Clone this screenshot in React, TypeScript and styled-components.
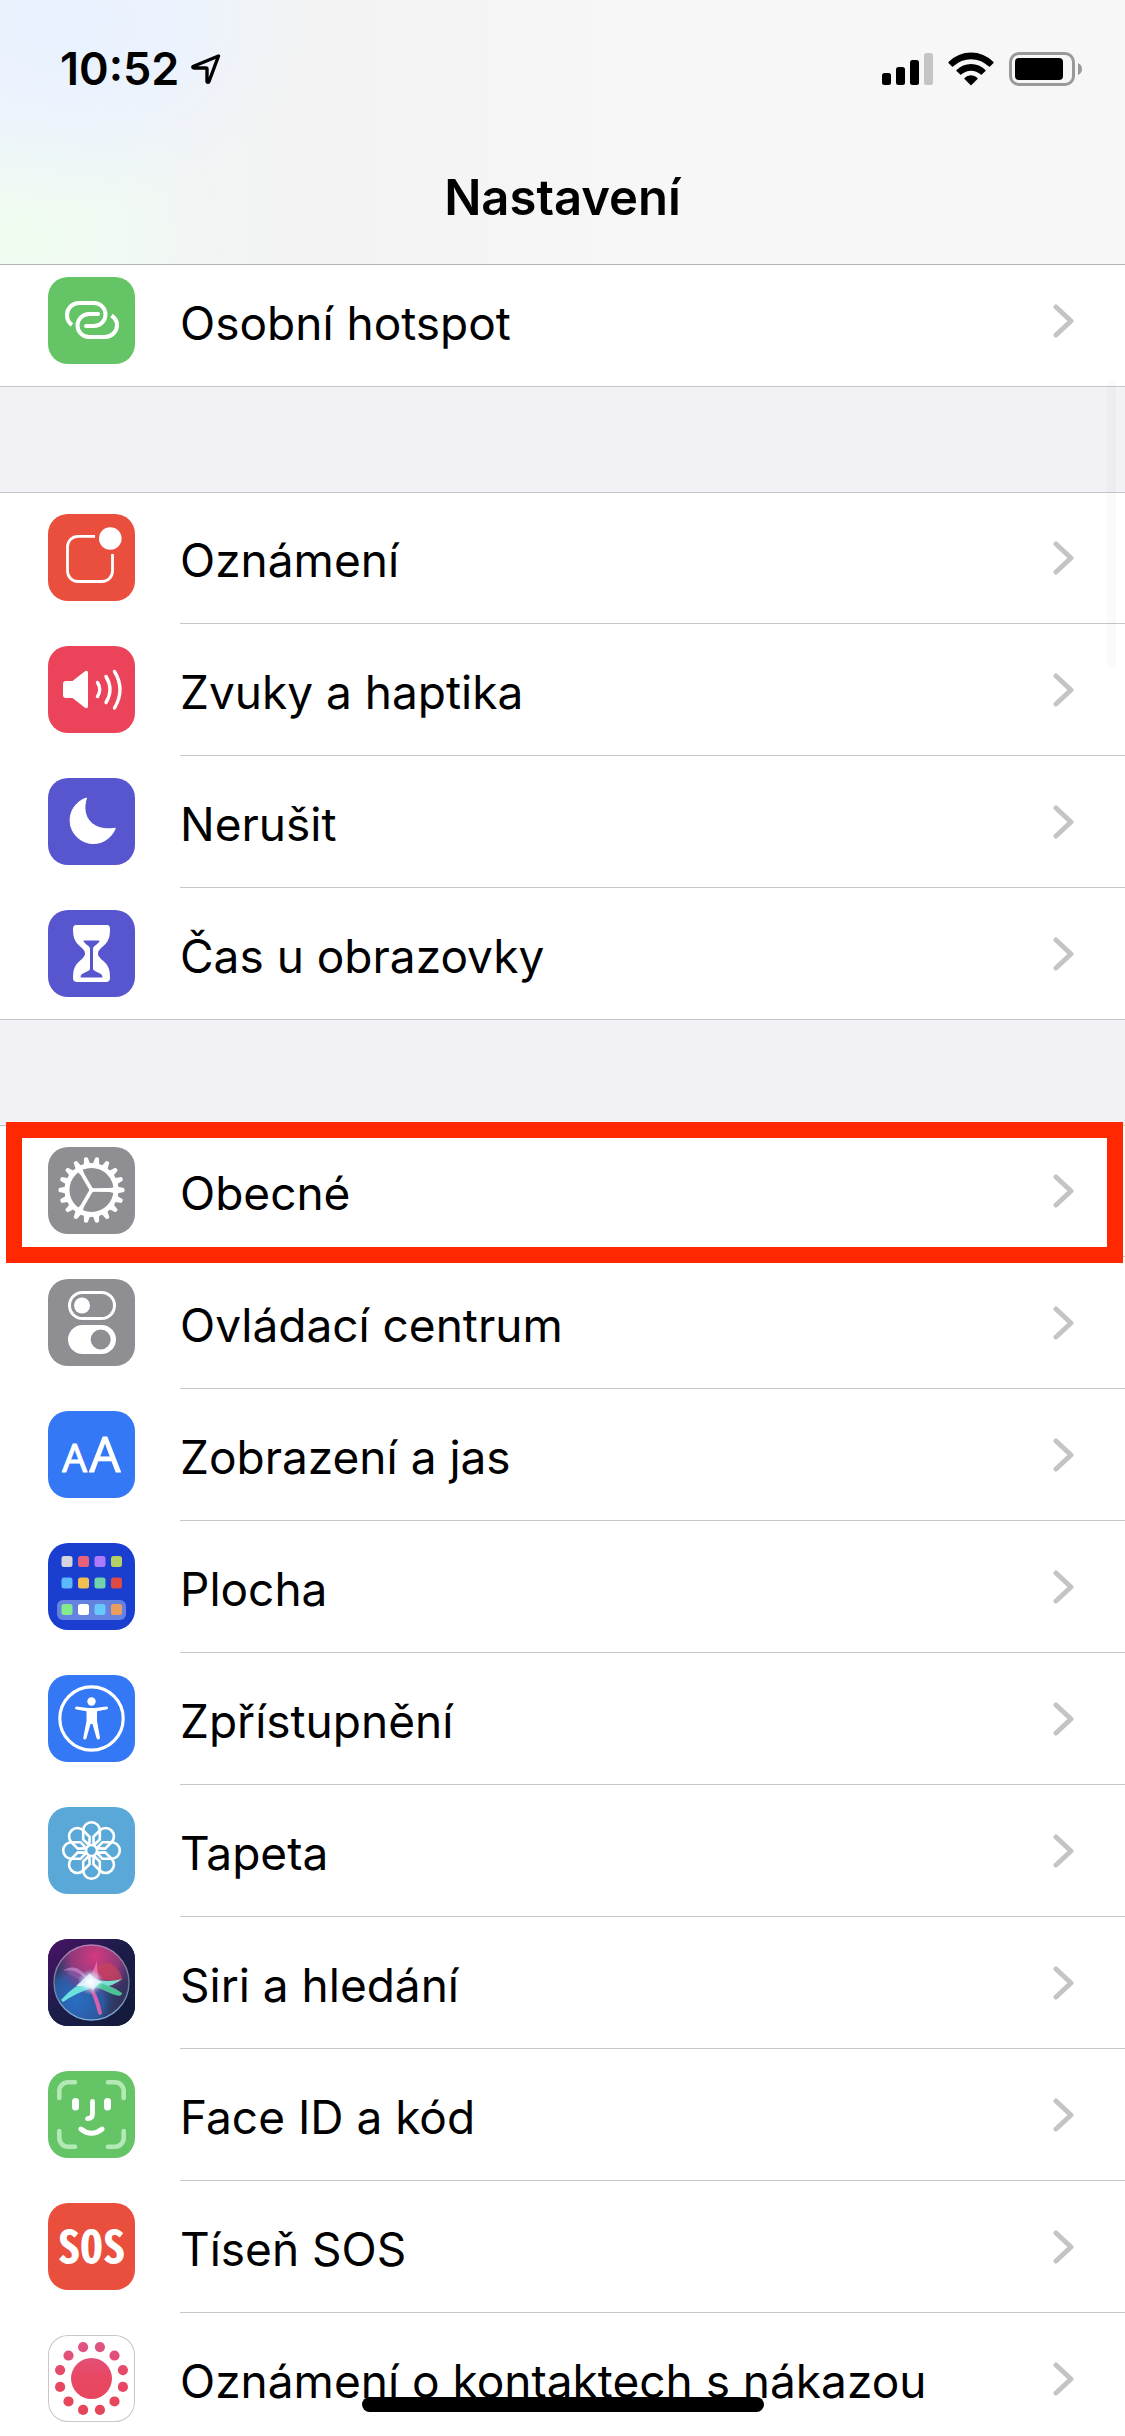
import React from 'react';
import styled, { createGlobalStyle } from 'styled-components';

const GlobalStyle = createGlobalStyle`
  * { box-sizing: border-box; }
  body {
    margin: 0;
    background: #f2f1f6;
    color: #000;
    font-family: Inter, "Liberation Sans", sans-serif;
    -webkit-font-smoothing: antialiased;
  }
`;

const Screen = styled.div`
  position: relative;
  display: flex;
  flex-direction: column;
  height: 100vh;
  overflow: hidden;
`;

const Header = styled.header`
  flex: none;
  border-bottom: 1px solid #b2b2b4;
  background:
    radial-gradient(ellipse 250px 190px at 60px 20px, #e8f1ff 0%, rgba(234, 242, 255, 0.8) 45%, rgba(240, 243, 248, 0) 100%),
    radial-gradient(ellipse 210px 190px at 20px 240px, #f0fcf0 0%, rgba(240, 251, 242, 0.8) 45%, rgba(244, 246, 244, 0) 100%),
    linear-gradient(90deg, #f2f5f7 0%, #f3f3f3 30%, #f7f7f7 60%);
`;

const StatusBar = styled.div`
  display: flex;
  align-items: center;
  justify-content: space-between;
  height: 132px;
  padding: 6px 43px 0 60px;
`;

const Clock = styled.div`
  display: flex;
  align-items: center;
  gap: 12px;
  font-size: 45px;
  line-height: 56px;
  font-weight: 600;
`;

const StatusIcons = styled.div`
  display: flex;
  align-items: center;
  gap: 15px;
`;

const Title = styled.h1`
  margin: 0;
  height: 132px;
  font-size: 49px;
  line-height: 132px;
  font-weight: 600;
  text-align: center;
`;

const Content = styled.main`
  flex: 1;
  min-height: 0;
  overflow: hidden;
`;

const Scrolled = styled.div`
  display: flex;
  flex-direction: column;
  gap: 105px;
  margin-top: -10px;
`;

const Group = styled.ul`
  margin: 0;
  padding: 0;
  list-style: none;
  background: #fff;
  box-shadow: inset 0 1px #c6c6c8, inset 0 -1px #c6c6c8;
`;

const Item = styled.li`
  position: relative;
`;

const Row = styled.a`
  display: flex;
  padding-left: 48px;
  color: inherit;
  text-decoration: none;
`;

const Tile = styled.span<{ $bg: string; $outlined?: boolean }>`
  flex: none;
  width: 87px;
  height: 87px;
  margin: 22px 45px 23px 0;
  overflow: hidden;
  border-radius: 20px;
  background: ${p => p.$bg};
  box-shadow: ${p => (p.$outlined ? 'inset 0 0 0 1px #c8c8ca' : 'none')};

  svg {
    display: block;
  }
`;

const Body = styled.span`
  display: flex;
  flex: 1;
  align-items: center;
  justify-content: space-between;
  padding-right: 51px;
  border-bottom: 1px solid #c6c6c8;

  ${Item}:last-child & {
    border-bottom-color: transparent;
  }
`;

const Label = styled.span`
  padding-top: 4px;
  font-size: 46px;
  line-height: 60px;
  white-space: nowrap;
`;

const Highlight = styled.span`
  position: absolute;
  inset: -3px 2px -6px 6px;
  z-index: 1;
  border: 16px solid #ff2800;
  pointer-events: none;
`;

const ScrollThumb = styled.div`
  position: absolute;
  top: 380px;
  right: 9px;
  width: 9px;
  height: 288px;
  border-radius: 5px;
  background: rgba(0, 0, 0, 0.02);
`;

const HomeIndicator = styled.div`
  position: absolute;
  bottom: 24px;
  left: 50%;
  width: 402px;
  height: 15px;
  margin-left: -201px;
  border-radius: 8px;
  background: #000;
`;

const Glyph = ({ children }: { children: React.ReactNode }) => (
  <svg width="87" height="87" viewBox="0 0 87 87" fill="none" aria-hidden="true">
    {children}
  </svg>
);

const HotspotGlyph = () => (
  <Glyph>
    <g stroke="#fff" strokeWidth="4">
      <path d="M24 48C20.500 45.500 19 42 19 38A12 12 0 0 1 31 26H46A11.500 11.500 0 0 1 46 49H38" />
      <path d="M50 37H41A11.500 11.500 0 0 0 41 60H57A12 12 0 0 0 69 48C69 44 67 41 63.500 38.500" />
      <path d="M38 49h.01M50 37h.01" strokeLinecap="round" />
    </g>
  </Glyph>
);

const NotificationsGlyph = () => (
  <Glyph>
    <path d="M47 22.300H30A10.500 10.500 0 0 0 19.500 32.800V57A10.500 10.500 0 0 0 30 67.500H54A10.500 10.500 0 0 0 64.500 57V40" stroke="#fff" strokeWidth="2.800" />
    <circle cx="62.300" cy="24.500" r="11.300" fill="#fff" />
  </Glyph>
);

const SoundGlyph = () => (
  <Glyph>
    <path d="M18 35H24.500L36 26Q40 23 40 27V60Q40 64 36 61L24.500 52H18Q15 52 15 49V38Q15 35 18 35Z" fill="#fff" />
    <g stroke="#fff" strokeWidth="3.400" strokeLinecap="round">
      <path d="M49.500 36.500Q54 43.500 49.500 50.500" />
      <path d="M58 30.500Q66 43.500 58 56.500" />
      <path d="M66.500 25.500Q77.500 43.500 66.500 62" />
    </g>
  </Glyph>
);

const MoonGlyph = () => (
  <Glyph>
    <path d="M38.500 20A23.300 23.300 0 1 0 67.300 50.200C46 54 32 40 38.500 20Z" fill="#fff" stroke="#fff" strokeLinejoin="round" />
  </Glyph>
);

const HourglassGlyph = () => (
  <Glyph>
    <path d="M28 15H59Q62 15 62 19C62 30 59 33 53 38Q47 43.500 53 49C59 54 62 57 62 68Q62 72 58 72H29Q25 72 25 68C25 57 28 54 34 49Q40 43.500 34 38C28 33 25 30 25 19Q25 15 28 15Z" fill="#fff" />
    <path d="M35.500 30.500H51.500Q52 32 46 36.500Q45 37.500 45 39V58.500Q45 60 47 61L53 64Q54.500 65 54.500 67.500H32.500Q32.500 65 34 64L40 61Q42 60 42 58.500V39Q42 37.500 41 36.500Q35 32 35.500 30.500Z" fill="#5856ce" />
  </Glyph>
);

const GearGlyph = () => (
  <Glyph>
    <g transform="translate(43.500 43)">
      <circle r="24.500" stroke="#fff" strokeWidth="5" />
      {Array.from({ length: 18 }, (_, i) => (
        <path key={i} d="M25 -3.400L32.500 -1.900Q33.800 0 32.500 1.900L25 3.400Z" fill="#fff" transform={`rotate(${i * 20})`} />
      ))}
      {[0, 120, 240].map(a => (
        <path key={a} d="M0 -1.800L18 -1.900Q22 -2.200 24 -4V4Q22 2.200 18 1.900L0 1.800Z" fill="#fff" transform={`rotate(${a})`} />
      ))}
      <circle r="2.500" fill="#fff" />
    </g>
  </Glyph>
);

const TogglesGlyph = () => (
  <Glyph>
    <rect x="21.500" y="13.500" width="45" height="26" rx="13" stroke="#fff" strokeWidth="3" />
    <circle cx="34" cy="26.500" r="8" fill="#fff" />
    <rect x="20" y="46" width="48" height="29" rx="14.500" fill="#fff" />
    <circle cx="52.700" cy="60.500" r="10" fill="#8e8e93" />
  </Glyph>
);

const TextSizeGlyph = () => (
  <Glyph>
    <g
      fill="#fff"
      stroke="#fff"
      strokeLinejoin="round"
      fontFamily='"Open Sans", "Noto Sans", sans-serif'
      textAnchor="middle"
    >
      <text x="26.500" y="61" fontSize="39" strokeWidth="1.200">A</text>
      <text x="57" y="61" fontSize="49" strokeWidth="1.200">A</text>
    </g>
  </Glyph>
);

const appColors = [
  ['#d6d5dd', '#e9607a', '#ac7bfb', '#b4cf62'],
  ['#5cb8fb', '#f3bf52', '#72d2ac', '#df4b42'],
  ['#83eb8b', '#ffffff', '#66c8fb', '#eb9d60'],
];

const HomeScreenGlyph = () => (
  <Glyph>
    <rect x="9" y="57" width="69" height="20" rx="6" fill="#6582e0" />
    {appColors.map((row, r) =>
      row.map((fill, c) => (
        <rect key={`${r}-${c}`} x={13.5 + c * 16.5} y={[13, 34.5, 61][r]} width="11" height="11" rx="2.500" fill={fill} />
      )),
    )}
  </Glyph>
);

const AccessibilityGlyph = () => (
  <Glyph>
    <circle cx="43.500" cy="43.500" r="31.700" stroke="#fff" strokeWidth="3.200" />
    <circle cx="43.500" cy="26.500" r="4.200" fill="#fff" />
    <path d="M28.500 31.500L40 33H47L58.500 31.500Q60 31.500 60 33Q60 34 58.500 34.500L49 36.200V46L52 62.500Q52 64.500 50.500 64.500Q49 64.500 48.500 63L44.500 49H42.500L38.500 63Q38 64.500 36.500 64.500Q35 64.500 35.300 62.500L38.500 46V36.200L28.500 34.500Q27 34 27 33Q27 31.500 28.500 31.500Z" fill="#fff" />
  </Glyph>
);

const FlowerGlyph = () => (
  <Glyph>
    <g transform="translate(43.500 43.500)" stroke="#fff" strokeWidth="2.600">
      {Array.from({ length: 8 }, (_, i) => (
        <path key={i} d="M-2 -5L-8.300 -11V-20A8.300 8.300 0 0 1 8.300 -20V-11L2 -5" transform={`rotate(${i * 45})`} />
      ))}
      <circle r="5.500" />
    </g>
  </Glyph>
);

const SiriGlyph = () => (
  <Glyph>
    <defs>
      <linearGradient id="siriBack" x1="0" y1="0" x2="1" y2="1">
        <stop offset="0" stopColor="#4b1168" />
        <stop offset="0.450" stopColor="#1c1d4a" />
        <stop offset="1" stopColor="#121a38" />
      </linearGradient>
      <radialGradient id="siriPink" cx="0.550" cy="0.150" r="0.550">
        <stop offset="0" stopColor="#d63a80" />
        <stop offset="0.600" stopColor="#a83a80" stopOpacity="0.800" />
        <stop offset="1" stopColor="#7a3a90" stopOpacity="0" />
      </radialGradient>
      <radialGradient id="siriBlue" cx="0.300" cy="0.750" r="0.600">
        <stop offset="0" stopColor="#2a6fc4" />
        <stop offset="0.600" stopColor="#2a62b0" stopOpacity="0.800" />
        <stop offset="1" stopColor="#234" stopOpacity="0" />
      </radialGradient>
      <radialGradient id="siriCore">
        <stop offset="0" stopColor="#fff" />
        <stop offset="0.350" stopColor="#e8f6ff" stopOpacity="0.850" />
        <stop offset="1" stopColor="#9adfff" stopOpacity="0" />
      </radialGradient>
      <linearGradient id="siriRim" x1="0" y1="0" x2="0" y2="1">
        <stop offset="0" stopColor="#b77bb0" />
        <stop offset="0.500" stopColor="#6a7d96" />
        <stop offset="1" stopColor="#7fb4dd" />
      </linearGradient>
      <filter id="siriSoft" x="-20%" y="-20%" width="140%" height="140%">
        <feGaussianBlur stdDeviation="0.700" />
      </filter>
    </defs>
    <rect width="87" height="87" fill="url(#siriBack)" />
    <circle cx="43.500" cy="43.500" r="37" fill="#35335f" />
    <circle cx="43.500" cy="43.500" r="37" fill="url(#siriBlue)" />
    <circle cx="43.500" cy="43.500" r="37" fill="url(#siriPink)" />
    <g filter="url(#siriSoft)">
      <path d="M42 38C50 22 64 16 74 38Q76 42 66 42Z" fill="#c9405c" opacity="0.750" />
      <path d="M42 44C34 26 22 26 15 32C24 29 33 34 42 44Z" fill="#c78bd6" opacity="0.700" />
      <path d="M38 42C30 34 20 26 19 34C24 36 30 40 38 46Z" fill="#8a68b5" opacity="0.500" />
      <path d="M37 44Q46 32 49 22Q49 34 52 44Z" fill="#f06fb4" opacity="0.850" />
      <path d="M42 42Q28 44 13 61L15 63Q28 54 46 48Z" fill="#6fe9df" opacity="0.950" />
      <path d="M45 40Q60 44 74 40Q62 50 48 47Z" fill="#7ff0d8" opacity="0.900" />
      <path d="M46 43Q64 46 74 54Q74 59 64 55Q54 50 44 47Z" fill="#4fc79a" opacity="0.950" />
      <path d="M42 46Q50 54 54 74Q52 78 50 74Q46 58 40 47Z" fill="#e85fae" opacity="0.900" />
      <path d="M28 47Q36 40 42 34Q45 40 54 43Q48 46 46 51Q38 46 28 47Z" fill="#fff" opacity="0.850" />
    </g>
    <circle cx="42.500" cy="43" r="13" fill="url(#siriCore)" />
    <circle cx="43.500" cy="43.500" r="37.500" stroke="url(#siriRim)" strokeWidth="1.400" />
  </Glyph>
);

const FaceGlyph = () => (
  <Glyph>
    <path d="M11.300 27V20A8.700 8.700 0 0 1 20 11.300H27M60 11.300H67A8.700 8.700 0 0 1 75.700 20V27M75.700 60V67A8.700 8.700 0 0 1 67 75.700H60M27 75.700H20A8.700 8.700 0 0 1 11.300 67V60" stroke="#b3e9b5" strokeWidth="4.600" strokeLinecap="round" />
    <rect x="24" y="27" width="7" height="12.500" rx="3.500" fill="#fff" />
    <rect x="56" y="27" width="7" height="12.500" rx="3.500" fill="#fff" />
    <g stroke="#fff" strokeWidth="4.800" strokeLinecap="round">
      <path d="M44.500 30.500V43Q44.500 47.500 39.500 47.700" />
      <path d="M32.800 58Q43.500 66.500 54.200 58" />
    </g>
  </Glyph>
);

const SosGlyph = () => (
  <Glyph>
    <text x="43.500" y="60" fontFamily='"Noto Sans Mono CJK JP", "Roboto Condensed", Roboto, sans-serif' fontSize="45" fontWeight="700" fill="#fff" textAnchor="middle">
      SOS
    </text>
  </Glyph>
);

const ExposureGlyph = () => (
  <Glyph>
    <defs>
      <linearGradient id="exposure" gradientUnits="userSpaceOnUse" x1="0" y1="6" x2="0" y2="80">
        <stop offset="0" stopColor="#de5686" />
        <stop offset="0.500" stopColor="#e94763" />
        <stop offset="1" stopColor="#e5455a" />
      </linearGradient>
    </defs>
    <g fill="url(#exposure)">
      <circle cx="43.500" cy="43.500" r="20.500" />
      {Array.from({ length: 12 }, (_, i) => {
        const a = ((15 + i * 30) * Math.PI) / 180;
        return <circle key={i} cx={43.5 + 32.5 * Math.cos(a)} cy={43.5 + 32.5 * Math.sin(a)} r="5.100" />;
      })}
    </g>
  </Glyph>
);

const Chevron = () => (
  <svg width="21" height="34" viewBox="0 0 21 34" fill="none" aria-hidden="true">
    <path d="M3 3L18 17L3 31" stroke="#c4c4c6" strokeWidth="5" strokeLinecap="round" strokeLinejoin="round" />
  </svg>
);

const LocationArrow = () => (
  <svg width="30" height="30" viewBox="0 0 30 30" fill="none" role="img" aria-label="Poloha">
    <path d="M27.500 2L2 12.500Q1.500 14 3 14H15Q16 14 16 15V27.500Q17 29 18 27.500Z" stroke="#000" strokeWidth="3.400" strokeLinejoin="round" />
  </svg>
);

const Signal = () => (
  <svg width="51" height="34" viewBox="0 0 51 34" role="img" aria-label="Signál">
    <rect x="0" y="21" width="9" height="12" rx="2.500" />
    <rect x="14" y="15" width="9" height="18" rx="2.500" />
    <rect x="28" y="8" width="9" height="25" rx="2.500" />
    <rect x="42" y="1" width="9" height="32" rx="2.500" fill="#c4c4c4" />
  </svg>
);

const Wifi = () => (
  <svg width="46" height="34" viewBox="0 0 46 34" role="img" aria-label="Wi-Fi">
    <path d="M0.500 10Q10 .5 23 .5T45.500 10Q45.800 10.500 45.500 11L42 14.600Q41.500 15 41 14.600Q33 7.200 23 7.200T5 14.600Q4.500 15 4 14.600L.5 11Q.2 10.500 .5 10Z" />
    <path d="M8.500 18Q14.500 12 23 12T37.500 18Q37.900 18.500 37.500 19L33.800 22.600Q33.300 23 32.800 22.600Q28.500 18.800 23 18.800T13.200 22.600Q12.700 23 12.200 22.600L8.500 19Q8.100 18.500 8.500 18Z" />
    <path d="M16.500 26Q19 23.300 23 23.300T29.500 26Q29.900 26.500 29.500 27L23.500 33Q23 33.400 22.500 33L16.500 27Q16.100 26.500 16.500 26Z" />
  </svg>
);

const Battery = () => (
  <svg width="73" height="34" viewBox="0 0 73 34" role="img" aria-label="Baterie">
    <rect x="1.500" y="1.500" width="63" height="31" rx="8.500" fill="none" stroke="#999" strokeWidth="3" />
    <rect x="6" y="6" width="48" height="22" rx="4" />
    <path d="M69 11Q73 13 73 17T69 23Z" fill="#999" />
  </svg>
);

type Entry = {
  label: string;
  bg: string;
  icon: React.ReactNode;
  outlined?: boolean;
  highlighted?: boolean;
};

const groups: Entry[][] = [
  [{ label: 'Osobní hotspot', bg: '#65c466', icon: <HotspotGlyph /> }],
  [
    { label: 'Oznámení', bg: '#ea4e3d', icon: <NotificationsGlyph /> },
    { label: 'Zvuky a haptika', bg: '#eb445a', icon: <SoundGlyph /> },
    { label: 'Nerušit', bg: '#5856ce', icon: <MoonGlyph /> },
    { label: 'Čas u obrazovky', bg: '#5856ce', icon: <HourglassGlyph /> },
  ],
  [
    { label: 'Obecné', bg: '#8e8e93', icon: <GearGlyph />, highlighted: true },
    { label: 'Ovládací centrum', bg: '#8e8e93', icon: <TogglesGlyph /> },
    { label: 'Zobrazení a jas', bg: '#3478f6', icon: <TextSizeGlyph /> },
    { label: 'Plocha', bg: '#1a3ed0', icon: <HomeScreenGlyph /> },
    { label: 'Zpřístupnění', bg: '#3478f6', icon: <AccessibilityGlyph /> },
    { label: 'Tapeta', bg: '#5aa8d7', icon: <FlowerGlyph /> },
    { label: 'Siri a hledání', bg: '#1c1d4a', icon: <SiriGlyph /> },
    { label: 'Face ID a kód', bg: '#65c466', icon: <FaceGlyph /> },
    { label: 'Tíseň SOS', bg: '#ea4e3d', icon: <SosGlyph /> },
    { label: 'Oznámení o kontaktech s nákazou', bg: '#fff', icon: <ExposureGlyph />, outlined: true },
  ],
];

export default function App() {
  return (
    <>
      <GlobalStyle />
      <Screen>
        <Header>
          <StatusBar>
            <Clock>
              10:52
              <LocationArrow />
            </Clock>
            <StatusIcons>
              <Signal />
              <Wifi />
              <Battery />
            </StatusIcons>
          </StatusBar>
          <Title>Nastavení</Title>
        </Header>
        <Content>
          <Scrolled>
            {groups.map(group => (
              <Group key={group[0].label}>
                {group.map(entry => (
                  <Item key={entry.label}>
                    <Row href="#">
                      <Tile $bg={entry.bg} $outlined={entry.outlined}>
                        {entry.icon}
                      </Tile>
                      <Body>
                        <Label>{entry.label}</Label>
                        <Chevron />
                      </Body>
                    </Row>
                    {entry.highlighted && <Highlight />}
                  </Item>
                ))}
              </Group>
            ))}
          </Scrolled>
        </Content>
        <ScrollThumb />
        <HomeIndicator />
      </Screen>
    </>
  );
}
